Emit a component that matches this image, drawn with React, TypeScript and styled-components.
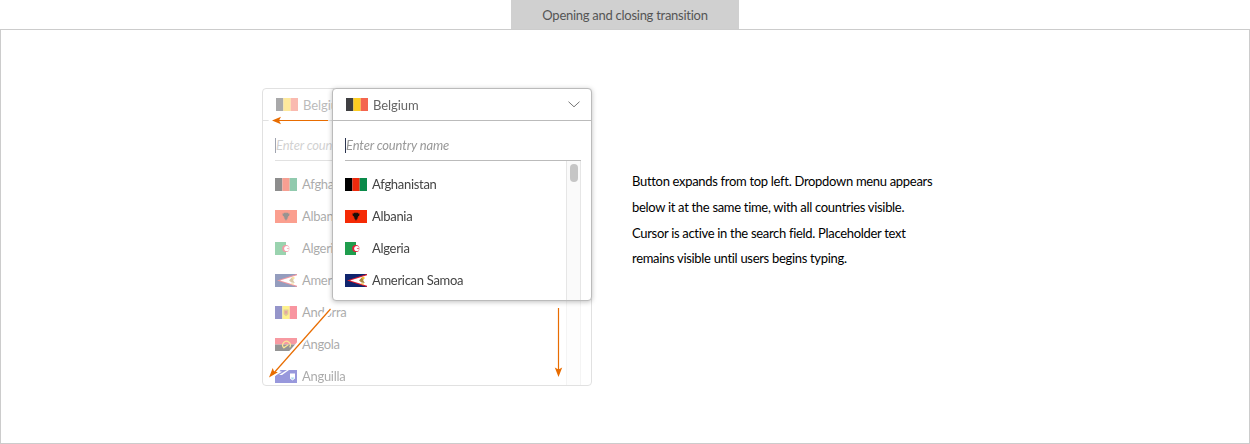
import React from 'react';
import styled, { createGlobalStyle } from 'styled-components';

const FONT = '"Lato", "Noto Sans", "Liberation Sans", sans-serif';

const GlobalStyle = createGlobalStyle`
  html, body {
    margin: 0;
    padding: 0;
    background: #fff;
    font-family: ${FONT};
  }
`;

const Page = styled.div`
  width: 1250px;
  height: 444px;
  display: flex;
  flex-direction: column;
  align-items: center;
  box-sizing: border-box;
`;

const Tab = styled.div`
  width: 228px;
  height: 29px;
  flex: none;
  background: #d0d0d0;
  color: #555;
  font-size: 13px;
  letter-spacing: -0.27px;
  line-height: 31px;
  text-align: center;
`;

const Frame = styled.section`
  box-sizing: border-box;
  width: 100%;
  height: 415px;
  border: 1px solid #ccc;
  padding: 58px 0 0 261px;
  display: flex;
  align-items: flex-start;
  gap: 40px;
`;

const Demo = styled.div`
  position: relative;
  width: 330px;
  height: 298px;
  flex: none;
`;

const Panel = styled.div<{ $popup?: boolean }>`
  box-sizing: border-box;
  display: flex;
  flex-direction: column;
  overflow: hidden;
  background: #fff;
  border: 1px solid #bbb;
  border-radius: 4px;
  ${(p) =>
    p.$popup
      ? `
    position: absolute;
    top: 0;
    left: 70px;
    width: 260px;
    height: 213px;
    box-shadow: 0 1px 5px rgba(0, 0, 0, 0.25);
  `
      : `
    width: 330px;
    height: 298px;
    opacity: 0.45;
  `}
`;

const Header = styled.div`
  box-sizing: border-box;
  height: 32px;
  flex: none;
  display: flex;
  align-items: center;
  gap: 5px;
  padding: 0 11px 0 13px;
  border-bottom: 1px solid #bbb;
  color: #666;
  font-size: 13px;
  letter-spacing: -0.05px;
`;

const Chevron = styled.svg`
  margin-left: auto;
  flex: none;
`;

const Search = styled.div`
  box-sizing: border-box;
  height: 40px;
  flex: none;
  margin: 0 10px 0 12px;
  padding-top: 9px;
  display: flex;
  align-items: center;
  border-bottom: 1px solid #bbb;
  color: #999;
  font-size: 13px;
  font-style: italic;
  letter-spacing: -0.15px;
  white-space: nowrap;
  overflow: hidden;
`;

const Caret = styled.span`
  width: 1px;
  height: 15px;
  flex: none;
  background: #2c3550;
`;

const ListArea = styled.div`
  flex: 1;
  min-height: 0;
  display: flex;
  margin: 0 10px 0 12px;
`;

const Rows = styled.ul`
  flex: 1;
  min-width: 0;
  list-style: none;
  margin: 0;
  padding: 7px 0 0;
`;

const Row = styled.li`
  height: 32px;
  display: flex;
  align-items: center;
  gap: 5px;
  color: #444;
  font-size: 13px;
  letter-spacing: -0.3px;
  white-space: nowrap;
`;

const ScrollTrack = styled.div`
  box-sizing: border-box;
  width: 15px;
  flex: none;
  padding: 3px 2px 0 3px;
  background: #fafafa;
  border-left: 1px solid #e6e6e6;
  border-right: 1px solid #e6e6e6;
`;

const ScrollThumb = styled.div`
  height: 18px;
  width: 8px;
  border-radius: 4px;
  background: #c6c6c6;
`;

const ArrowLayer = styled.svg`
  position: absolute;
  top: 0;
  left: 0;
  pointer-events: none;
`;

const Notes = styled.p`
  margin: 81px 0 0;
  color: #000;
  font-size: 13px;
  letter-spacing: -0.31px;
  line-height: 25.8px;
  white-space: pre-line;
`;

const FlagSvg = styled.svg`
  width: 22px;
  height: 13px;
  flex: none;
  display: block;
`;

const FLAGS: Record<string, React.ReactNode> = {
  Belgium: (
    <>
      <rect width="7.4" height="13" fill="#3f3f42" />
      <rect x="7.4" width="7.3" height="13" fill="#fdcd22" />
      <rect x="14.7" width="7.3" height="13" fill="#f4654e" />
    </>
  ),
  Afghanistan: (
    <>
      <rect width="7.4" height="13" fill="#000" />
      <rect x="7.4" width="7.3" height="13" fill="#ee2a0c" />
      <rect x="14.7" width="7.3" height="13" fill="#0a8a4a" />
    </>
  ),
  Albania: (
    <>
      <rect width="22" height="13" fill="#f52a05" />
      <path
        d="M11 2l.7 1.2 1.3-.6.4 1.1 1-.5v2l-.7 1-.7-.1.3 1.2-1 .4.3 1.2-1 .6-.6 1.5-.6-1.5-1-.6.3-1.2-1-.4.3-1.2-.7.1-.7-1v-2l1 .5.4-1.1 1.3.6z"
        fill="#1a0f0a"
      />
    </>
  ),
  Algeria: (
    <>
      <rect width="11" height="13" fill="#1f9d4d" />
      <rect x="11" width="11" height="13" fill="#fff" />
      <circle cx="10.8" cy="6.5" r="3.6" fill="#e2203a" />
      <circle cx="11.8" cy="6.5" r="2.6" fill="#fff" />
      <path d="M11.6 6.5l2.8-1.1-1 1.1 1 1.1z" fill="#e2203a" />
    </>
  ),
  'American Samoa': (
    <>
      <rect width="22" height="13" fill="#10256e" />
      <path d="M22 0L2 6.5 22 13z" fill="#e01a2c" />
      <path d="M22 1.3L5 6.5 22 11.7z" fill="#fff" />
      <path d="M14 6.4l3-3.2 2 .6-.8 2.6 1.6 2.6-3.2-.6z" fill="#a9853f" />
      <path d="M16.6 3.6l2.6-.8.6 1.6-2 .9zM16 9.2l3 .2-.2 1.2-2.4-.4z" fill="#f3c32b" />
    </>
  ),
  Andorra: (
    <>
      <rect width="7.4" height="13" fill="#14148a" />
      <rect x="7.4" width="7.3" height="13" fill="#fce300" />
      <rect x="14.7" width="7.3" height="13" fill="#f0142c" />
      <path d="M8.6 3.6h4.8v4.6l-2.4 2-2.4-2z" fill="#b98a1c" />
      <rect x="9.8" y="5" width="2.4" height="2.6" fill="#c8382a" />
    </>
  ),
  Angola: (
    <>
      <rect width="22" height="6.5" fill="#ee1c2e" />
      <rect y="6.5" width="22" height="6.5" fill="#111" />
      <path d="M9 10a3.8 3.8 0 1 1 5.6-.6" fill="none" stroke="#f6c915" strokeWidth="1.2" />
      <path d="M8 9.6l5-3.4.8.8-4.8 3.6z" fill="#f6c915" />
    </>
  ),
  Anguilla: (
    <>
      <rect width="22" height="13" fill="#1a1ab0" />
      <path d="M4 5L12 0h2L7 5z" fill="#fff" />
      <path d="M15 3.6h5v4.8l-2.5 2.2-2.5-2.2z" fill="#fff" />
      <path d="M15.6 7.6h3.8l-1.9 2.2z" fill="#3fa7d8" />
    </>
  ),
};

const Flag = ({ name }: { name: string }) => <FlagSvg viewBox="0 0 22 13">{FLAGS[name]}</FlagSvg>;

const COUNTRIES = [
  'Afghanistan',
  'Albania',
  'Algeria',
  'American Samoa',
  'Andorra',
  'Angola',
  'Anguilla',
];

const Dropdown = ({ popup }: { popup?: boolean }) => (
  <Panel $popup={popup}>
    <Header>
      <Flag name="Belgium" />
      Belgium
      <Chevron width="12" height="7" viewBox="0 0 12 7">
        <path d="M.5.7L6 5.8 11.5.7" fill="none" stroke="#777" strokeWidth="1" />
      </Chevron>
    </Header>
    <Search>
      <Caret />
      Enter country name
    </Search>
    <ListArea>
      <Rows>
        {COUNTRIES.map((name) => (
          <Row key={name}>
            <Flag name={name} />
            {name}
          </Row>
        ))}
      </Rows>
      <ScrollTrack>
        <ScrollThumb />
      </ScrollTrack>
    </ListArea>
  </Panel>
);

const Arrow = ({ line, head }: { line: string; head: string }) => (
  <>
    <path d={line} stroke="#fff" strokeWidth="6" fill="none" />
    <path d={head} fill="#fff" stroke="#fff" strokeWidth="3" />
    <path d={line} stroke="#e86c00" strokeWidth="1.2" fill="none" />
    <path d={head} fill="#e86c00" />
  </>
);

const App = () => (
  <Page>
    <GlobalStyle />
    <Tab>Opening and closing transition</Tab>
    <Frame>
      <Demo>
        <Dropdown />
        <Dropdown popup />
        <ArrowLayer width="330" height="298" viewBox="0 0 330 298">
          <Arrow line="M66 32.5H16" head="M10 32.5l9-3.7-2 3.7 2 3.7z" />
          <Arrow line="M68.5 221L11 286" head="M7 289.5l3.7-9.6 1.4 3.6 3.8.8z" />
          <Arrow line="M296.5 220V282" head="M296.5 289l-3.7-9.5 3.7 2 3.7-2z" />
        </ArrowLayer>
      </Demo>
      <Notes>
        {`Button expands from top left. Dropdown menu appears
below it at the same time, with all countries visible.
Cursor is active in the search field. Placeholder text
remains visible until users begins typing.`}
      </Notes>
    </Frame>
  </Page>
);

export default App;
